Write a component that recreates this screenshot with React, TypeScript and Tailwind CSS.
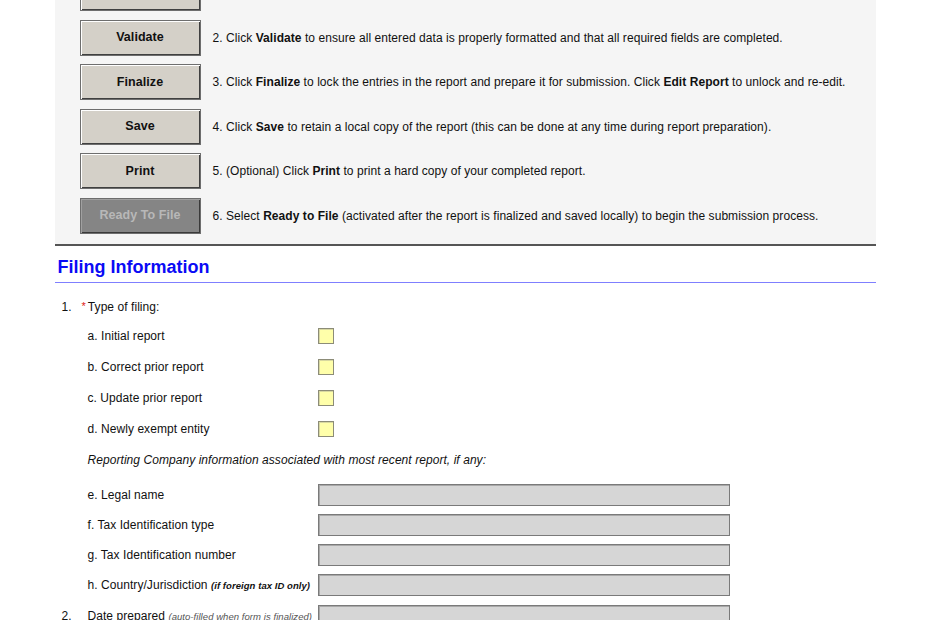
import React from "react";

const Btn = ({ label, disabled }: { label: string; disabled?: boolean }) => (
  <div
    className={
      "w-[121px] h-[36px] shrink-0 flex items-center justify-center font-bold text-[12.5px] border border-[#6e6e6e] " +
      (disabled
        ? "bg-[#858585] text-[#b8b8b8] shadow-[inset_1px_1px_0_#a0a0a0,inset_-1px_-1px_0_#3a3a3a]"
        : "bg-[#d4d0c8] text-[#111] shadow-[inset_1px_1px_0_#ffffff,inset_-1px_-1px_0_#404040]")
    }
  >
    {label}
  </div>
);

const steps: { label: string; text: React.ReactNode; disabled?: boolean }[] = [
  { label: "Edit Report", text: <>1. Click <b>Edit Report</b> to unlock the report.</> },
  {
    label: "Validate",
    text: (
      <>
        2. Click <b>Validate</b> to ensure all entered data is properly formatted and that all required fields are completed.
      </>
    ),
  },
  {
    label: "Finalize",
    text: (
      <>
        3. Click <b>Finalize</b> to lock the entries in the report and prepare it for submission. Click <b>Edit Report</b> to unlock and re-edit.
      </>
    ),
  },
  {
    label: "Save",
    text: (
      <>
        4. Click <b>Save</b> to retain a local copy of the report (this can be done at any time during report preparation).
      </>
    ),
  },
  {
    label: "Print",
    text: (
      <>
        5. (Optional) Click <b>Print</b> to print a hard copy of your completed report.
      </>
    ),
  },
  {
    label: "Ready To File",
    disabled: true,
    text: (
      <>
        6. Select <b>Ready to File</b> (activated after the report is finalized and saved locally) to begin the submission process.
      </>
    ),
  },
];

const Check = () => (
  <div className="w-[16px] h-[16px] bg-[#ffffaa] border border-[#8c8c78] shadow-[inset_1px_1px_0_#d8d8a0]" />
);

const Field = () => (
  <div className="w-[412px] h-[22px] bg-[#d6d6d6] border border-[#7a7a7a] shadow-[inset_1px_1px_0_#a8a8a8]" />
);

export default function App() {
  return (
    <div
      className="w-[930px] h-[620px] overflow-hidden bg-white text-[#111] text-[12px] tracking-[0.06px]"
      style={{ fontFamily: '"Liberation Sans", Arial, sans-serif' }}
    >
      <div className="mx-auto w-[821px]">
        <div className="bg-[#f5f5f5] border-b-2 border-[#555] pl-[25px] pb-[10px] mt-[-25px] flex flex-col gap-[8.5px]">
          {steps.map((s) => (
            <div key={s.label} className="flex items-center gap-[12px]">
              <Btn label={s.label} disabled={s.disabled} />
              <div className="whitespace-nowrap">{s.text}</div>
            </div>
          ))}
        </div>
        <div className="mt-[10px] border-b border-[#7f7fff] pb-[4px] pl-[3px] text-[18px] font-bold text-[#0a0af5] leading-[22px] tracking-normal">
          Filing Information
        </div>
        <div className="flex flex-col">
          <div className="flex items-center h-[28px] mt-[10px]">
            <span className="w-[27px] pl-[7px]">1.</span>
            <span className="text-[#e02020] text-[11px] mr-[2px]">*</span>
            <span>Type of filing:</span>
          </div>
          {["a. Initial report", "b. Correct prior report", "c. Update prior report", "d. Newly exempt entity"].map((l) => (
            <div key={l} className="flex items-center h-[31px] pl-[33px]">
              <span className="w-[230px]">{l}</span>
              <Check />
            </div>
          ))}
          <div className="flex items-center h-[31px] pl-[33px] italic">
            Reporting Company information associated with most recent report, if any:
          </div>
          <div className="h-[4px]" />
          {[
            { l: "e. Legal name" },
            { l: "f. Tax Identification type" },
            { l: "g. Tax Identification number" },
            { l: "h. Country/Jurisdiction", extra: "(if foreign tax ID only)" },
          ].map((r) => (
            <div key={r.l} className="flex items-center h-[30px] pl-[33px]">
              <span className="w-[230px] whitespace-nowrap">
                {r.l} {r.extra && <span className="italic font-bold text-[9.5px]">{r.extra}</span>}
              </span>
              <Field />
            </div>
          ))}
          <div className="flex items-center h-[31px] mt-[1px]">
            <span className="w-[33px] pl-[7px]">2.</span>
            <span className="w-[230px] whitespace-nowrap">
              Date prepared <span className="italic text-[9.5px] text-[#555]">(auto-filled when form is finalized)</span>
            </span>
            <Field />
          </div>
        </div>
      </div>
    </div>
  );
}
